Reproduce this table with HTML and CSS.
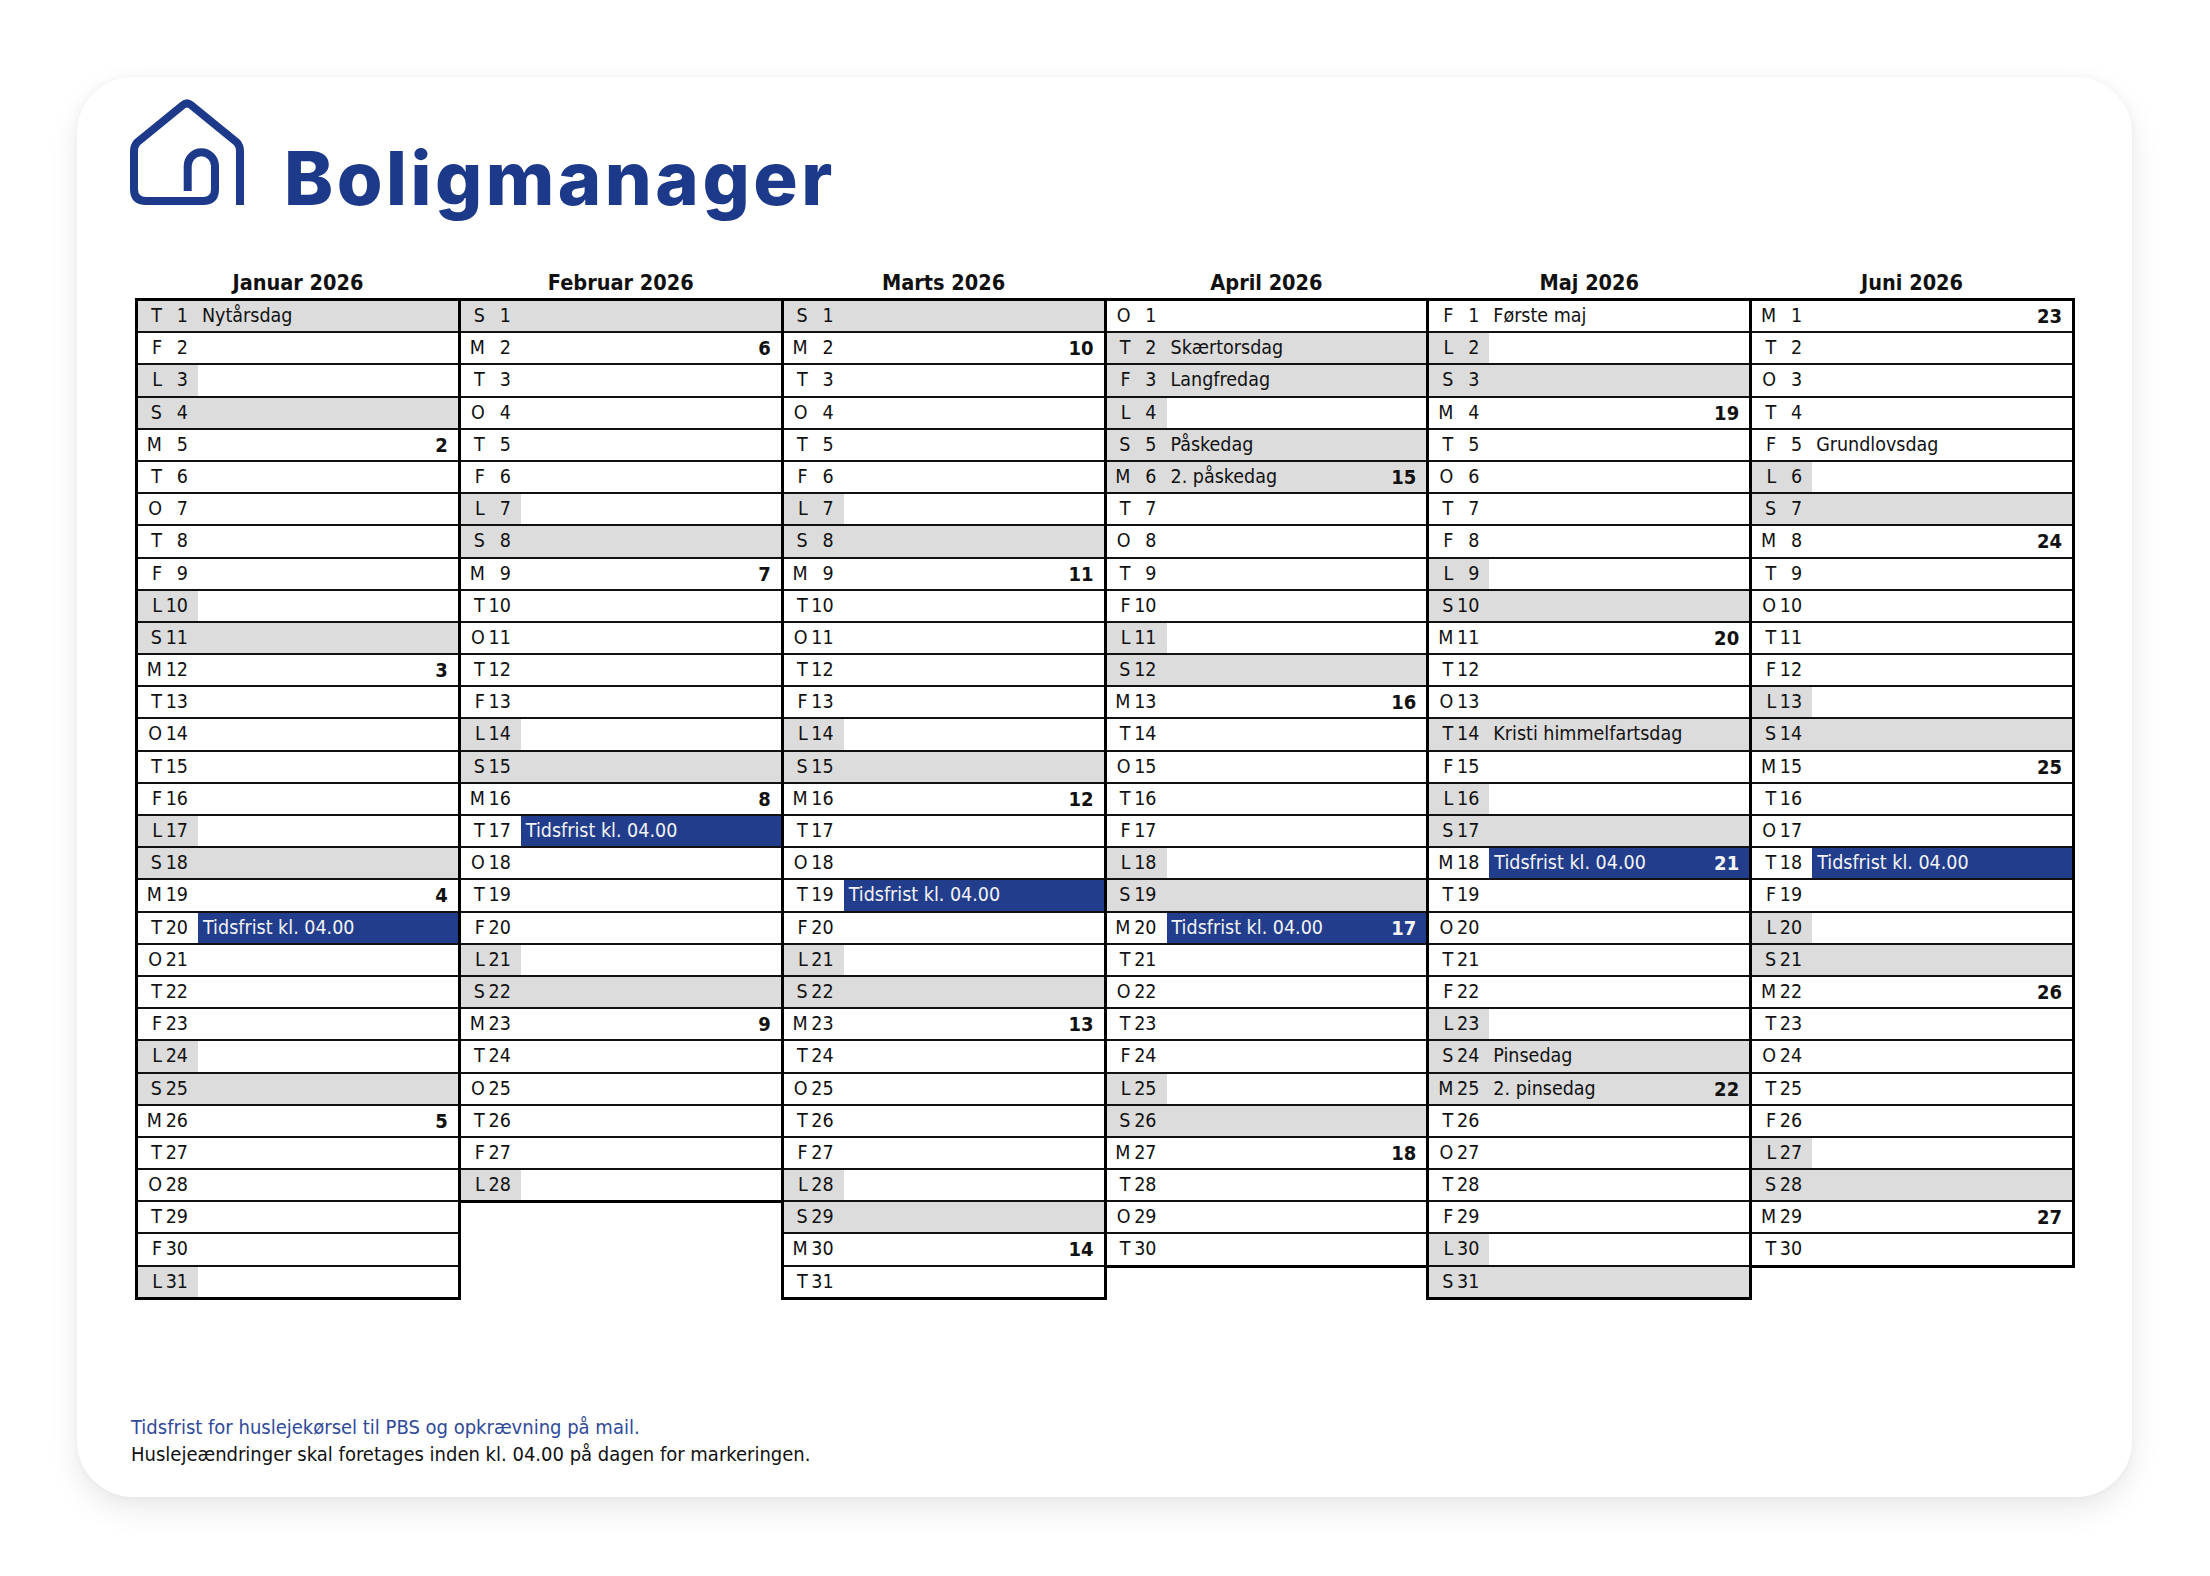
FILE: index.html
```html
<!DOCTYPE html>
<html lang="da">
<head>
<meta charset="utf-8">
<title>Boligmanager – Huslejekalender 2026</title>
<link rel="stylesheet" href="styles.css">
</head>
<body>
<div class="page">
<div class="card">
  <div class="brand">
    <svg class="house" viewBox="0 0 114 106" width="114" height="106" aria-hidden="true">
      <path d="M110,106 V52 Q110,47 107,43.5 L61,6 Q57,2.8 53,6 L7,43.5 Q4,47 4,52 V90 Q4,102 16,102 H73 Q85,102 85,90 V67 A13.65,13.65 0 0 0 57.7,67 V92" fill="none" stroke="#1d3a8a" stroke-width="8" stroke-linejoin="round"/>
    </svg>
    <span class="brand-name">Boligmanager</span>
  </div>

  <div class="cal">
    <div class="mon">
      <div class="mh">Januar 2026</div>
      <div class="tb">
        <div class="r hol"><i>T</i><i>1</i><span class="c">Nytårsdag</span></div>
        <div class="r"><i>F</i><i>2</i></div>
        <div class="r sat"><i>L</i><i>3</i></div>
        <div class="r sun"><i>S</i><i>4</i></div>
        <div class="r"><i>M</i><i>5</i><span class="c"><b>2</b></span></div>
        <div class="r"><i>T</i><i>6</i></div>
        <div class="r"><i>O</i><i>7</i></div>
        <div class="r"><i>T</i><i>8</i></div>
        <div class="r"><i>F</i><i>9</i></div>
        <div class="r sat"><i>L</i><i>10</i></div>
        <div class="r sun"><i>S</i><i>11</i></div>
        <div class="r"><i>M</i><i>12</i><span class="c"><b>3</b></span></div>
        <div class="r"><i>T</i><i>13</i></div>
        <div class="r"><i>O</i><i>14</i></div>
        <div class="r"><i>T</i><i>15</i></div>
        <div class="r"><i>F</i><i>16</i></div>
        <div class="r sat"><i>L</i><i>17</i></div>
        <div class="r sun"><i>S</i><i>18</i></div>
        <div class="r"><i>M</i><i>19</i><span class="c"><b>4</b></span></div>
        <div class="r"><i>T</i><i>20</i><span class="c tf">Tidsfrist kl. 04.00</span></div>
        <div class="r"><i>O</i><i>21</i></div>
        <div class="r"><i>T</i><i>22</i></div>
        <div class="r"><i>F</i><i>23</i></div>
        <div class="r sat"><i>L</i><i>24</i></div>
        <div class="r sun"><i>S</i><i>25</i></div>
        <div class="r"><i>M</i><i>26</i><span class="c"><b>5</b></span></div>
        <div class="r"><i>T</i><i>27</i></div>
        <div class="r"><i>O</i><i>28</i></div>
        <div class="r"><i>T</i><i>29</i></div>
        <div class="r"><i>F</i><i>30</i></div>
        <div class="r sat"><i>L</i><i>31</i></div>
      </div>
    </div>

    <div class="mon">
      <div class="mh">Februar 2026</div>
      <div class="tb">
        <div class="r sun"><i>S</i><i>1</i></div>
        <div class="r"><i>M</i><i>2</i><span class="c"><b>6</b></span></div>
        <div class="r"><i>T</i><i>3</i></div>
        <div class="r"><i>O</i><i>4</i></div>
        <div class="r"><i>T</i><i>5</i></div>
        <div class="r"><i>F</i><i>6</i></div>
        <div class="r sat"><i>L</i><i>7</i></div>
        <div class="r sun"><i>S</i><i>8</i></div>
        <div class="r"><i>M</i><i>9</i><span class="c"><b>7</b></span></div>
        <div class="r"><i>T</i><i>10</i></div>
        <div class="r"><i>O</i><i>11</i></div>
        <div class="r"><i>T</i><i>12</i></div>
        <div class="r"><i>F</i><i>13</i></div>
        <div class="r sat"><i>L</i><i>14</i></div>
        <div class="r sun"><i>S</i><i>15</i></div>
        <div class="r"><i>M</i><i>16</i><span class="c"><b>8</b></span></div>
        <div class="r"><i>T</i><i>17</i><span class="c tf">Tidsfrist kl. 04.00</span></div>
        <div class="r"><i>O</i><i>18</i></div>
        <div class="r"><i>T</i><i>19</i></div>
        <div class="r"><i>F</i><i>20</i></div>
        <div class="r sat"><i>L</i><i>21</i></div>
        <div class="r sun"><i>S</i><i>22</i></div>
        <div class="r"><i>M</i><i>23</i><span class="c"><b>9</b></span></div>
        <div class="r"><i>T</i><i>24</i></div>
        <div class="r"><i>O</i><i>25</i></div>
        <div class="r"><i>T</i><i>26</i></div>
        <div class="r"><i>F</i><i>27</i></div>
        <div class="r sat"><i>L</i><i>28</i></div>
      </div>
    </div>

    <div class="mon">
      <div class="mh">Marts 2026</div>
      <div class="tb">
        <div class="r sun"><i>S</i><i>1</i></div>
        <div class="r"><i>M</i><i>2</i><span class="c"><b>10</b></span></div>
        <div class="r"><i>T</i><i>3</i></div>
        <div class="r"><i>O</i><i>4</i></div>
        <div class="r"><i>T</i><i>5</i></div>
        <div class="r"><i>F</i><i>6</i></div>
        <div class="r sat"><i>L</i><i>7</i></div>
        <div class="r sun"><i>S</i><i>8</i></div>
        <div class="r"><i>M</i><i>9</i><span class="c"><b>11</b></span></div>
        <div class="r"><i>T</i><i>10</i></div>
        <div class="r"><i>O</i><i>11</i></div>
        <div class="r"><i>T</i><i>12</i></div>
        <div class="r"><i>F</i><i>13</i></div>
        <div class="r sat"><i>L</i><i>14</i></div>
        <div class="r sun"><i>S</i><i>15</i></div>
        <div class="r"><i>M</i><i>16</i><span class="c"><b>12</b></span></div>
        <div class="r"><i>T</i><i>17</i></div>
        <div class="r"><i>O</i><i>18</i></div>
        <div class="r"><i>T</i><i>19</i><span class="c tf">Tidsfrist kl. 04.00</span></div>
        <div class="r"><i>F</i><i>20</i></div>
        <div class="r sat"><i>L</i><i>21</i></div>
        <div class="r sun"><i>S</i><i>22</i></div>
        <div class="r"><i>M</i><i>23</i><span class="c"><b>13</b></span></div>
        <div class="r"><i>T</i><i>24</i></div>
        <div class="r"><i>O</i><i>25</i></div>
        <div class="r"><i>T</i><i>26</i></div>
        <div class="r"><i>F</i><i>27</i></div>
        <div class="r sat"><i>L</i><i>28</i></div>
        <div class="r sun"><i>S</i><i>29</i></div>
        <div class="r"><i>M</i><i>30</i><span class="c"><b>14</b></span></div>
        <div class="r"><i>T</i><i>31</i></div>
      </div>
    </div>

    <div class="mon">
      <div class="mh">April 2026</div>
      <div class="tb">
        <div class="r"><i>O</i><i>1</i></div>
        <div class="r hol"><i>T</i><i>2</i><span class="c">Skærtorsdag</span></div>
        <div class="r hol"><i>F</i><i>3</i><span class="c">Langfredag</span></div>
        <div class="r sat"><i>L</i><i>4</i></div>
        <div class="r sun"><i>S</i><i>5</i><span class="c">Påskedag</span></div>
        <div class="r hol"><i>M</i><i>6</i><span class="c">2. påskedag<b>15</b></span></div>
        <div class="r"><i>T</i><i>7</i></div>
        <div class="r"><i>O</i><i>8</i></div>
        <div class="r"><i>T</i><i>9</i></div>
        <div class="r"><i>F</i><i>10</i></div>
        <div class="r sat"><i>L</i><i>11</i></div>
        <div class="r sun"><i>S</i><i>12</i></div>
        <div class="r"><i>M</i><i>13</i><span class="c"><b>16</b></span></div>
        <div class="r"><i>T</i><i>14</i></div>
        <div class="r"><i>O</i><i>15</i></div>
        <div class="r"><i>T</i><i>16</i></div>
        <div class="r"><i>F</i><i>17</i></div>
        <div class="r sat"><i>L</i><i>18</i></div>
        <div class="r sun"><i>S</i><i>19</i></div>
        <div class="r"><i>M</i><i>20</i><span class="c tf">Tidsfrist kl. 04.00<b>17</b></span></div>
        <div class="r"><i>T</i><i>21</i></div>
        <div class="r"><i>O</i><i>22</i></div>
        <div class="r"><i>T</i><i>23</i></div>
        <div class="r"><i>F</i><i>24</i></div>
        <div class="r sat"><i>L</i><i>25</i></div>
        <div class="r sun"><i>S</i><i>26</i></div>
        <div class="r"><i>M</i><i>27</i><span class="c"><b>18</b></span></div>
        <div class="r"><i>T</i><i>28</i></div>
        <div class="r"><i>O</i><i>29</i></div>
        <div class="r"><i>T</i><i>30</i></div>
      </div>
    </div>

    <div class="mon">
      <div class="mh">Maj 2026</div>
      <div class="tb">
        <div class="r"><i>F</i><i>1</i><span class="c">Første maj</span></div>
        <div class="r sat"><i>L</i><i>2</i></div>
        <div class="r sun"><i>S</i><i>3</i></div>
        <div class="r"><i>M</i><i>4</i><span class="c"><b>19</b></span></div>
        <div class="r"><i>T</i><i>5</i></div>
        <div class="r"><i>O</i><i>6</i></div>
        <div class="r"><i>T</i><i>7</i></div>
        <div class="r"><i>F</i><i>8</i></div>
        <div class="r sat"><i>L</i><i>9</i></div>
        <div class="r sun"><i>S</i><i>10</i></div>
        <div class="r"><i>M</i><i>11</i><span class="c"><b>20</b></span></div>
        <div class="r"><i>T</i><i>12</i></div>
        <div class="r"><i>O</i><i>13</i></div>
        <div class="r hol"><i>T</i><i>14</i><span class="c">Kristi himmelfartsdag</span></div>
        <div class="r"><i>F</i><i>15</i></div>
        <div class="r sat"><i>L</i><i>16</i></div>
        <div class="r sun"><i>S</i><i>17</i></div>
        <div class="r"><i>M</i><i>18</i><span class="c tf">Tidsfrist kl. 04.00<b>21</b></span></div>
        <div class="r"><i>T</i><i>19</i></div>
        <div class="r"><i>O</i><i>20</i></div>
        <div class="r"><i>T</i><i>21</i></div>
        <div class="r"><i>F</i><i>22</i></div>
        <div class="r sat"><i>L</i><i>23</i></div>
        <div class="r sun"><i>S</i><i>24</i><span class="c">Pinsedag</span></div>
        <div class="r hol"><i>M</i><i>25</i><span class="c">2. pinsedag<b>22</b></span></div>
        <div class="r"><i>T</i><i>26</i></div>
        <div class="r"><i>O</i><i>27</i></div>
        <div class="r"><i>T</i><i>28</i></div>
        <div class="r"><i>F</i><i>29</i></div>
        <div class="r sat"><i>L</i><i>30</i></div>
        <div class="r sun"><i>S</i><i>31</i></div>
      </div>
    </div>

    <div class="mon">
      <div class="mh">Juni 2026</div>
      <div class="tb">
        <div class="r"><i>M</i><i>1</i><span class="c"><b>23</b></span></div>
        <div class="r"><i>T</i><i>2</i></div>
        <div class="r"><i>O</i><i>3</i></div>
        <div class="r"><i>T</i><i>4</i></div>
        <div class="r"><i>F</i><i>5</i><span class="c">Grundlovsdag</span></div>
        <div class="r sat"><i>L</i><i>6</i></div>
        <div class="r sun"><i>S</i><i>7</i></div>
        <div class="r"><i>M</i><i>8</i><span class="c"><b>24</b></span></div>
        <div class="r"><i>T</i><i>9</i></div>
        <div class="r"><i>O</i><i>10</i></div>
        <div class="r"><i>T</i><i>11</i></div>
        <div class="r"><i>F</i><i>12</i></div>
        <div class="r sat"><i>L</i><i>13</i></div>
        <div class="r sun"><i>S</i><i>14</i></div>
        <div class="r"><i>M</i><i>15</i><span class="c"><b>25</b></span></div>
        <div class="r"><i>T</i><i>16</i></div>
        <div class="r"><i>O</i><i>17</i></div>
        <div class="r"><i>T</i><i>18</i><span class="c tf">Tidsfrist kl. 04.00</span></div>
        <div class="r"><i>F</i><i>19</i></div>
        <div class="r sat"><i>L</i><i>20</i></div>
        <div class="r sun"><i>S</i><i>21</i></div>
        <div class="r"><i>M</i><i>22</i><span class="c"><b>26</b></span></div>
        <div class="r"><i>T</i><i>23</i></div>
        <div class="r"><i>O</i><i>24</i></div>
        <div class="r"><i>T</i><i>25</i></div>
        <div class="r"><i>F</i><i>26</i></div>
        <div class="r sat"><i>L</i><i>27</i></div>
        <div class="r sun"><i>S</i><i>28</i></div>
        <div class="r"><i>M</i><i>29</i><span class="c"><b>27</b></span></div>
        <div class="r"><i>T</i><i>30</i></div>
      </div>
    </div>
  </div>

  <div class="foot">
    <p class="foot-blue">Tidsfrist for huslejekørsel til PBS og opkrævning på mail.</p>
    <p>Huslejeændringer skal foretages inden kl. 04.00 på dagen for markeringen.</p>
  </div>
</div>
</div>
</body>
</html>
```

FILE: styles.css
```css
html, body {
  margin: 0;
  padding: 0;
  background: #ffffff;
}

.page {
  width: 2210px;
  height: 1576px;
  box-sizing: border-box;
  padding: 77px 78px 0 77px;
}

.card {
  width: 2055px;
  height: 1420px;
  box-sizing: border-box;
  background: #ffffff;
  border-radius: 56px;
  box-shadow: 0 12px 30px rgba(0, 0, 0, 0.09), 0 0 8px rgba(0, 0, 0, 0.04);
  padding: 22px 57px 0 53px;
  font-family: "DejaVu Sans Condensed", "DejaVu Sans", sans-serif;
  font-stretch: condensed;
  color: #111111;
}

/* ---------- brand ---------- */
.brand {
  display: flex;
  align-items: baseline;
  gap: 40px;
  height: 106px;
}

.house {
  display: block;
  flex: none;
}

.brand-name {
  font-family: "Inter", "Lato", sans-serif;
  font-stretch: normal;
  font-weight: 800;
  font-size: 74px;
  line-height: 1;
  letter-spacing: 3.5px;
  color: #1d3a8a;
}

/* ---------- calendar ---------- */
.cal {
  display: grid;
  grid-template-columns: repeat(6, 1fr);
  width: 1937px;
  margin: 63px 0 0 5px;
  align-items: start;
}

.mon {
  margin-right: -3px;
  min-width: 0;
}

.mh {
  height: 30px;
  line-height: 30px;
  text-align: center;
  font-weight: 700;
  font-size: 21.5px;
}

.tb {
  border: 3px solid #000000;
}

.r {
  display: grid;
  grid-template-columns: 24px 26px 1fr;
  height: 30.2px;
  line-height: 30.2px;
  font-size: 19.5px;
  border-bottom: 2px solid #111111;
  background: #ffffff;
  white-space: nowrap;
}

.r:last-child {
  border-bottom: 0;
}

.r i {
  font-style: normal;
  text-align: right;
}

.r.sat {
  background: linear-gradient(90deg, #dcdcdc 0 60px, #ffffff 60px);
}

.r.sun,
.r.hol {
  background: #dcdcdc;
}

.c {
  display: flex;
  margin-left: 10px;
  padding: 0 10px 0 4px;
  min-width: 0;
}

.c b {
  margin-left: auto;
  font-weight: 700;
  font-size: 20px;
}

.c.tf {
  background: #213d8c;
  color: #f4f4f4;
  padding-left: 5px;
}

/* ---------- footer ---------- */
.foot {
  margin-top: 114px;
  padding-left: 1px;
  font-size: 20px;
  line-height: 27px;
}

.foot p {
  margin: 0;
}

.foot-blue {
  color: #2f4a99;
}
```
